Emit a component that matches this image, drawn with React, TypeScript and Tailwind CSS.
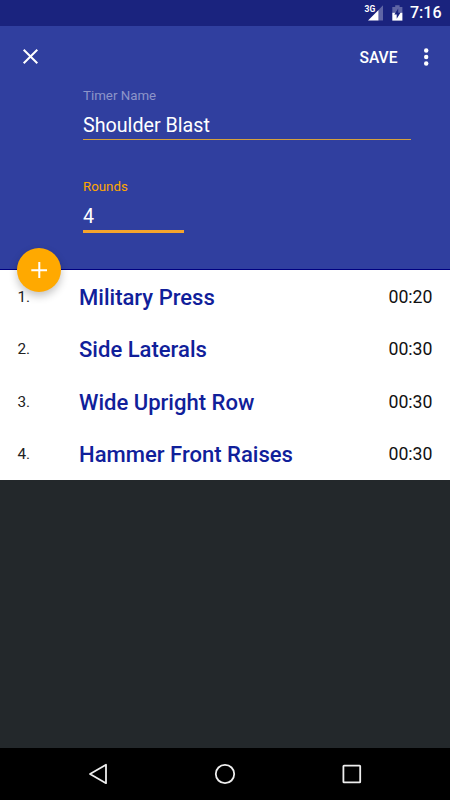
const exercises = [
  { name: 'Military Press', time: '00:20' },
  { name: 'Side Laterals', time: '00:30' },
  { name: 'Wide Upright Row', time: '00:30' },
  { name: 'Hammer Front Raises', time: '00:30' },
]

function StatusBar() {
  return (
    <div className="flex h-[26px] items-center justify-end bg-[#1a237e] pr-[8.5px] text-white">
      <div className="relative mr-[9px] h-4 w-[15px]">
        <span className="absolute -left-[3.5px] -top-[2px] text-[8.5px] leading-[12px] font-bold">3G</span>
        <svg className="block" width="15" height="16" viewBox="0 0 15 16">
          <path d="M10.5 4.9L15 0.3V15.5H10.5z" fill="#fff" fillOpacity="0.3" />
          <path d="M10.5 4.9V15.5H0z" fill="#fff" />
        </svg>
      </div>
      <svg className="mr-[7px] block" width="11" height="16" viewBox="0 0 11 16">
        <path d="M3.2 0.3h4.4v1.6h2.8v6H0.3v-6h2.9z" fill="#fff" fillOpacity="0.3" />
        <path d="M0.3 7.8h10.1v7.8H0.3z" fill="#fff" />
        <path d="M6.2 3.6L2.3 9.6h2.4v4.2L8.6 7.6H6.2z" fill="#1a237e" />
      </svg>
      <span className="text-[16px] leading-[26px] font-medium">7:16</span>
    </div>
  )
}

function Header() {
  return (
    <header className="h-[244px] border-b border-[#000080] bg-[#303f9f] text-white">
      <div className="flex h-[62px] items-center justify-between pl-[22px] pr-[21px]">
        <svg className="-mt-px" width="17" height="17" viewBox="0 0 17 17" fill="none" stroke="#fff" strokeWidth="2">
          <path d="M1.7 1.7l13.6 13.6M15.3 1.7L1.7 15.3" />
        </svg>
        <div className="flex items-center">
          <span className="mr-[26.5px] pt-px text-[15.6px] leading-[20px] font-medium">SAVE</span>
          <svg width="5" height="20" viewBox="0 0 5 20" fill="#fff">
            <circle cx="2.2" cy="3.5" r="2.2" />
            <circle cx="2.2" cy="10" r="2.2" />
            <circle cx="2.2" cy="16.5" r="2.2" />
          </svg>
        </div>
      </div>

      <div className="-mt-px pl-[83px]">
        <div className="w-[328px]">
          <div className="text-[13.3px] leading-[18px] text-[#8d95c9]">Timer Name</div>
          <div className="h-[35px] border-b border-[#d5a13c] pt-[8px] text-[19.7px] leading-[26px]">Shoulder Blast</div>
        </div>
        <div className="mt-[38px] w-[101px]">
          <div className="text-[13.3px] leading-[18px] text-[#ffa700]">Rounds</div>
          <div className="h-[37px] border-b-[3px] border-[#f5a42c] pt-[8px] text-[19.7px] leading-[26px]">4</div>
        </div>
      </div>
    </header>
  )
}

function NavBar() {
  return (
    <nav className="flex h-[52px] items-center justify-between bg-black pl-[88px] pr-[88px]">
      <svg width="20" height="22" viewBox="0 0 20 22" fill="none" stroke="#eee" strokeWidth="1.8">
        <path d="M18 1.8v18.4L2 11z" strokeLinejoin="round" />
      </svg>
      <svg width="22" height="22" viewBox="0 0 22 22" fill="none" stroke="#eee" strokeWidth="1.8">
        <circle cx="11" cy="11" r="9.2" />
      </svg>
      <svg width="20" height="20" viewBox="0 0 20 20" fill="none" stroke="#eee" strokeWidth="1.8">
        <rect x="1.4" y="1.6" width="16.8" height="16.8" rx="0.6" />
      </svg>
    </nav>
  )
}

export default function App() {
  return (
    <div className="flex h-[800px] w-[450px] flex-col overflow-hidden bg-[#23282b] font-[Roboto,sans-serif]">
      <StatusBar />
      <Header />

      <main className="relative flex-1">
        {/* add button sits over the header edge */}
        <button className="absolute left-[17px] -top-[22px] z-10 flex h-[44px] w-[44px] items-center justify-center rounded-full bg-[#ffa900] shadow-[0_4px_8px_rgba(0,0,0,0.24)]">
          <svg width="16" height="16" viewBox="0 0 16 16" stroke="#fff" strokeWidth="2">
            <path d="M8.3 0v16M0.3 8.2h16" />
          </svg>
        </button>
        <ul className="bg-white">
          {exercises.map((exercise, i) => (
            <li key={exercise.name} className="flex h-[52.5px] items-center pl-[17.5px] pr-[17.5px] pt-[2px]">
              <span className="w-[61.5px] text-[15.3px] text-[#222]">{i + 1}.</span>
              <span className="flex-1 pt-[0.5px] text-[22.05px] font-medium text-[#10209a]">{exercise.name}</span>
              <span className="pb-[0.5px] text-[17.7px] text-[#111]">{exercise.time}</span>
            </li>
          ))}
        </ul>
      </main>

      <NavBar />
    </div>
  )
}
